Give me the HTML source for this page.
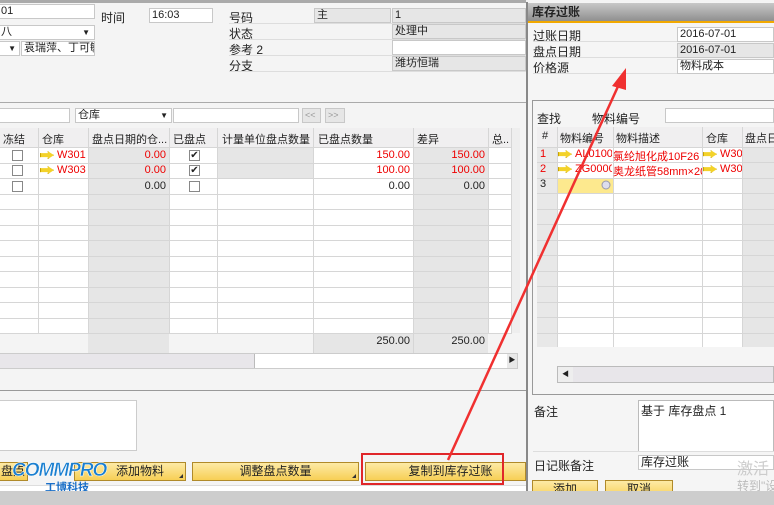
<!DOCTYPE html>
<html><head><meta charset="utf-8">
<style>
*{margin:0;padding:0;box-sizing:border-box}
body{width:774px;height:505px;overflow:hidden;background:#f4f4f4;font-family:"Liberation Sans","Noto Sans CJK SC",sans-serif;font-size:11px;color:#222;position:relative}
.a{position:absolute;white-space:nowrap}
.in{position:absolute;background:#fff;border:1px solid #c8c8c8;height:15px;line-height:13px;padding-left:2px;white-space:nowrap;overflow:hidden}
.gr{background:#e6e6e6}
.r{color:#e00}
.cb{position:absolute;width:11px;height:11px;border:1px solid #888;background:#fff;font-size:10px;line-height:9px;text-align:center}
.btn{position:absolute;height:19px;border:1px solid #b08a2a;background:linear-gradient(#fdeaa6,#f7cf55);text-align:center;line-height:17px;font-size:12px}
.btn i{position:absolute;right:2px;bottom:2px;width:0;height:0;border-left:4px solid transparent;border-bottom:4px solid #333}
.arw{display:inline-block;width:14px;height:8px;background:#f3d22a;border:1px solid #c9a300;clip-path:polygon(0 25%,55% 25%,55% 0,100% 50%,55% 100%,55% 75%,0 75%);vertical-align:middle;margin-right:3px}
</style></head><body>
<div class="a" style="left:0;top:0;width:526px;height:3px;background:#aaa"></div>
<div class="in" style="left:-2px;top:4px;width:97px">01</div>
<div class="a" style="left:101px;top:9px;font-size:12px">时间</div>
<div class="in" style="left:149px;top:8px;width:64px">16:03</div>
<div class="in" style="left:-2px;top:25px;width:97px">八<span style="position:absolute;right:4px;font-size:8px">▼</span></div>
<div class="in" style="left:-2px;top:41px;width:22px"><span style="position:absolute;right:3px;font-size:8px">▼</span></div>
<div class="in" style="left:21px;top:41px;width:74px">袁瑞萍、丁可敏</div>
<div class="a" style="left:229px;top:9px;font-size:12px">号码</div>
<div class="a" style="left:229px;top:25px;font-size:12px">状态</div>
<div class="a" style="left:229px;top:41px;font-size:12px">参考 2</div>
<div class="a" style="left:229px;top:57px;font-size:12px">分支</div>
<div class="a" style="left:229px;top:23px;width:297px;border-top:1px solid #ddd"></div>
<div class="a" style="left:229px;top:39px;width:297px;border-top:1px solid #ddd"></div>
<div class="a" style="left:229px;top:55px;width:297px;border-top:1px solid #ddd"></div>
<div class="a" style="left:229px;top:71px;width:297px;border-top:1px solid #ddd"></div>
<div class="in gr" style="left:314px;top:8px;width:77px">主</div>
<div class="in gr" style="left:392px;top:8px;width:134px">1</div>
<div class="in gr" style="left:392px;top:24px;width:134px">处理中</div>
<div class="in" style="left:392px;top:40px;width:134px"></div>
<div class="in gr" style="left:392px;top:56px;width:134px">潍坊恒瑞</div>
<div class="a" style="left:0;top:102px;width:526px;border-top:1px solid #aaa"></div>
<div class="in" style="left:-2px;top:108px;width:72px"></div>
<div class="in" style="left:75px;top:108px;width:97px">仓库<span style="position:absolute;right:3px;font-size:8px">▼</span></div>
<div class="in" style="left:173px;top:108px;width:126px"></div>
<div class="in gr" style="left:302px;top:108px;width:19px;color:#999;font-size:9px">&lt;&lt;</div>
<div class="in gr" style="left:325px;top:108px;width:20px;color:#999;font-size:9px">&gt;&gt;</div>
<svg class="a" style="left:0;top:128px" width="520" height="225">
<rect x="0" y="0" width="512" height="225" fill="#fff"/>
<rect x="0" y="0" width="512" height="19" fill="#f0eff0"/>
<rect x="88" y="19" width="81" height="206" fill="#e6e6e6"/>
<rect x="218" y="19" width="95" height="31" fill="#e6e6e6"/>
<rect x="413" y="19" width="75" height="186" fill="#e6e6e6"/>
<rect x="0" y="205" width="512" height="20" fill="#f4f4f4"/>
<rect x="88" y="205" width="81" height="20" fill="#e6e6e6"/>
<rect x="313" y="205" width="175" height="20" fill="#e6e6e6"/>
<g stroke="#d6d6d6">
<line x1="38.5" y1="0" x2="38.5" y2="205"/><line x1="88.5" y1="0" x2="88.5" y2="205"/><line x1="169.5" y1="0" x2="169.5" y2="205"/><line x1="217.5" y1="0" x2="217.5" y2="205"/><line x1="313.5" y1="0" x2="313.5" y2="225"/><line x1="413.5" y1="0" x2="413.5" y2="225"/><line x1="488.5" y1="0" x2="488.5" y2="205"/><line x1="511.5" y1="0" x2="511.5" y2="205"/>
<line x1="0" y1="19.5" x2="512" y2="19.5"/><line x1="0" y1="35.5" x2="512" y2="35.5"/><line x1="0" y1="50.5" x2="512" y2="50.5"/><line x1="0" y1="66.5" x2="512" y2="66.5"/><line x1="0" y1="81.5" x2="512" y2="81.5"/><line x1="0" y1="97.5" x2="512" y2="97.5"/><line x1="0" y1="112.5" x2="512" y2="112.5"/><line x1="0" y1="128.5" x2="512" y2="128.5"/><line x1="0" y1="143.5" x2="512" y2="143.5"/><line x1="0" y1="159.5" x2="512" y2="159.5"/><line x1="0" y1="174.5" x2="512" y2="174.5"/><line x1="0" y1="190.5" x2="512" y2="190.5"/><line x1="0" y1="205.5" x2="512" y2="205.5"/>
</g>
<rect x="512" y="0" width="8" height="205" fill="#eee"/>
</svg>
<div class="a" style="left:3px;top:131px">冻结</div>
<div class="a" style="left:42px;top:131px">仓库</div>
<div class="a" style="left:92px;top:131px">盘点日期的仓...</div>
<div class="a" style="left:173px;top:131px">已盘点</div>
<div class="a" style="left:222px;top:131px">计量单位盘点数量</div>
<div class="a" style="left:318px;top:131px">已盘点数量</div>
<div class="a" style="left:417px;top:131px">差异</div>
<div class="a" style="left:492px;top:131px">总..</div>
<div class="cb" style="left:12px;top:150px"></div><div class="cb" style="left:12px;top:165px"></div><div class="cb" style="left:12px;top:181px"></div>
<div class="cb" style="left:189px;top:150px">✔</div><div class="cb" style="left:189px;top:165px">✔</div><div class="cb" style="left:189px;top:181px"></div>
<div class="a r" style="left:40px;top:149px"><span class="arw"></span>W301</div>
<div class="a r" style="left:40px;top:164px"><span class="arw"></span>W303</div>
<div class="a r" style="left:120px;top:149px;width:46px;text-align:right">0.00</div>
<div class="a r" style="left:120px;top:164px;width:46px;text-align:right">0.00</div>
<div class="a" style="left:120px;top:180px;width:46px;text-align:right">0.00</div>
<div class="a r" style="left:350px;top:149px;width:60px;text-align:right">150.00</div>
<div class="a r" style="left:350px;top:164px;width:60px;text-align:right">100.00</div>
<div class="a" style="left:350px;top:180px;width:60px;text-align:right">0.00</div>
<div class="a r" style="left:425px;top:149px;width:60px;text-align:right">150.00</div>
<div class="a r" style="left:425px;top:164px;width:60px;text-align:right">100.00</div>
<div class="a" style="left:425px;top:180px;width:60px;text-align:right">0.00</div>
<div class="a" style="left:350px;top:335px;width:60px;text-align:right">250.00</div>
<div class="a" style="left:425px;top:335px;width:60px;text-align:right">250.00</div>
<div class="a" style="left:0;top:353px;width:518px;height:16px;border:1px solid #ccc;background:#fff"></div>
<div class="a" style="left:0;top:354px;width:255px;height:14px;background:#e8e6ea;border-right:1px solid #bbb"></div>
<div class="a" style="left:507px;top:354px;width:10px;height:14px;background:#e8e8e8;font-size:7px;line-height:14px;text-align:center">▶</div>
<div class="a" style="left:0;top:390px;width:526px;border-top:1px solid #999"></div>
<div class="a" style="left:-2px;top:400px;width:139px;height:51px;background:#fff;border:1px solid #ccc"></div>
<div class="btn" style="left:-2px;top:462px;width:30px">盘点</div>
<div class="btn" style="left:74px;top:462px;width:112px;padding-left:20px">添加物料<i></i></div>
<div class="btn" style="left:192px;top:462px;width:167px">调整盘点数量<i></i></div>
<div class="btn" style="left:365px;top:462px;width:161px;padding-left:10px">复制到库存过账</div>
<div class="a" style="left:361px;top:453px;width:143px;height:32px;border:2px solid #e0262a"></div>
<div class="a" style="left:0;top:485px;width:526px;height:6px;background:#fff;border-top:1px solid #ddd"></div>
<div class="a" style="left:12px;top:460px;font:italic bold 19px 'Liberation Sans',sans-serif;color:#1a7fd0;letter-spacing:-1px;-webkit-text-stroke:0.5px #fff">COMMPRO</div>
<div class="a" style="left:45px;top:479px;font-weight:bold;font-size:11px;color:#1a6fc8">工博科技</div>
<div class="a" style="left:526px;top:2px;width:248px;height:490px;background:#f5f5f5;border-left:2px solid #888"></div>
<div class="a" style="left:528px;top:3px;width:246px;height:18px;background:linear-gradient(#c8c8c8,#8f8f8f);font-weight:bold;font-size:12px;padding-left:4px;line-height:18px">库存过账</div>
<div class="a" style="left:528px;top:21px;width:246px;height:2px;background:#f2a900"></div>
<div class="a" style="left:533px;top:27px;font-size:12px">过账日期</div>
<div class="a" style="left:533px;top:43px;font-size:12px">盘点日期</div>
<div class="a" style="left:533px;top:59px;font-size:12px">价格源</div>
<div class="a" style="left:533px;top:41px;width:241px;border-top:1px solid #ddd"></div>
<div class="a" style="left:533px;top:57px;width:241px;border-top:1px solid #ddd"></div>
<div class="a" style="left:533px;top:73px;width:241px;border-top:1px solid #ddd"></div>
<div class="in" style="left:677px;top:27px;width:97px">2016-07-01</div>
<div class="in gr" style="left:677px;top:43px;width:97px">2016-07-01</div>
<div class="in" style="left:677px;top:59px;width:97px">物料成本</div>
<div class="a" style="left:532px;top:100px;width:244px;height:295px;border:1px solid #999"></div>
<div class="a" style="left:537px;top:110px;font-size:12px">查找</div>
<div class="a" style="left:592px;top:110px;font-size:12px">物料编号</div>
<div class="in" style="left:665px;top:108px;width:109px"></div>
<svg class="a" style="left:537px;top:127px" width="237" height="220">
<rect x="0" y="0" width="237" height="220" fill="#fff"/>
<rect x="0" y="0" width="237" height="20" fill="#f0eff0"/>
<rect x="0" y="20" width="20" height="200" fill="#e8e8e8"/>
<rect x="205" y="20" width="32" height="200" fill="#e6e6e6"/>
<rect x="20" y="51" width="56" height="15" fill="#fde98e"/>
<g stroke="#d6d6d6">
<line x1="20.5" y1="0" x2="20.5" y2="220"/><line x1="76.5" y1="0" x2="76.5" y2="220"/><line x1="165.5" y1="0" x2="165.5" y2="220"/><line x1="205.5" y1="0" x2="205.5" y2="220"/>
<line x1="0" y1="20.5" x2="237" y2="20.5"/><line x1="0" y1="35.5" x2="237" y2="35.5"/><line x1="0" y1="51.5" x2="237" y2="51.5"/><line x1="0" y1="66.5" x2="237" y2="66.5"/><line x1="0" y1="82.5" x2="237" y2="82.5"/><line x1="0" y1="97.5" x2="237" y2="97.5"/><line x1="0" y1="113.5" x2="237" y2="113.5"/><line x1="0" y1="128.5" x2="237" y2="128.5"/><line x1="0" y1="144.5" x2="237" y2="144.5"/><line x1="0" y1="159.5" x2="237" y2="159.5"/><line x1="0" y1="175.5" x2="237" y2="175.5"/><line x1="0" y1="190.5" x2="237" y2="190.5"/><line x1="0" y1="206.5" x2="237" y2="206.5"/>
</g>
<circle cx="69" cy="58" r="4" fill="#dde" stroke="#99a"/>
</svg>
<div class="a" style="left:542px;top:130px">#</div>
<div class="a" style="left:560px;top:130px">物料编号</div>
<div class="a" style="left:616px;top:130px">物料描述</div>
<div class="a" style="left:706px;top:130px">仓库</div>
<div class="a" style="left:745px;top:130px">盘点日</div>
<div class="a r" style="left:540px;top:148px">1</div>
<div class="a r" style="left:540px;top:163px">2</div>
<div class="a" style="left:540px;top:178px">3</div>
<div class="a r" style="left:558px;top:148px;width:54px;overflow:hidden"><span class="arw"></span>AL01000</div>
<div class="a r" style="left:558px;top:163px;width:54px;overflow:hidden"><span class="arw"></span>ZG0000</div>
<div class="a r" style="left:613px;top:148px;width:89px;overflow:hidden">氯纶旭化成10F26</div>
<div class="a r" style="left:613px;top:163px;width:89px;overflow:hidden">奥龙纸管58mm×200</div>
<div class="a r" style="left:703px;top:148px;width:39px;overflow:hidden"><span class="arw"></span>W30</div>
<div class="a r" style="left:703px;top:163px;width:39px;overflow:hidden"><span class="arw"></span>W30</div>
<div class="a" style="left:557px;top:366px;width:217px;height:17px;border:1px solid #bbb;background:#e8e6ea"></div>
<div class="a" style="left:558px;top:367px;width:15px;height:15px;background:#eee;font-size:7px;line-height:15px;text-align:center">◀</div>
<div class="a" style="left:534px;top:403px;font-size:12px">备注</div>
<div class="a" style="left:638px;top:400px;width:136px;height:52px;background:#fff;border:1px solid #bbb;padding:1px 2px;font-size:12px">基于 库存盘点 1</div>
<div class="a" style="left:533px;top:451px;width:241px;border-top:1px solid #ddd"></div>
<div class="a" style="left:534px;top:457px;font-size:12px">日记账备注</div>
<div class="in" style="left:638px;top:455px;width:136px;font-size:12px">库存过账</div>
<div class="a" style="left:737px;top:455px;font-size:16px;color:#ccc">激活</div>
<div class="a" style="left:737px;top:477px;font-size:12px;color:#bbb">转到"设</div>
<div class="btn" style="left:532px;top:480px;width:66px">添加</div>
<div class="btn" style="left:605px;top:480px;width:68px">取消</div>
<div class="a" style="left:0;top:491px;width:774px;height:14px;background:#cdcdcd"></div>
<svg class="a" style="left:0;top:0" width="774" height="505">
<line x1="448" y1="460" x2="620" y2="82" stroke="#f03030" stroke-width="2.5"/>
<polygon points="626,68 612,86 626,90" fill="#f03030"/>
</svg>
</body></html>
